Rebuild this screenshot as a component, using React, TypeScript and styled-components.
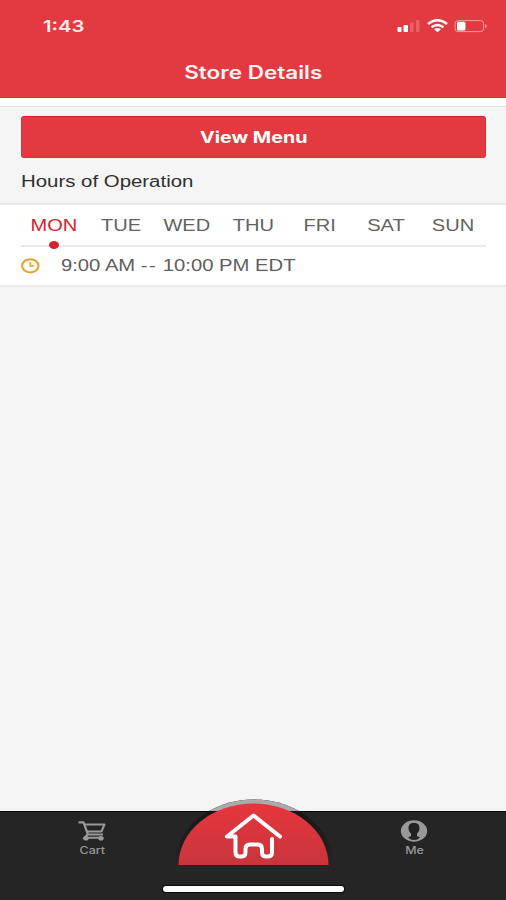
import React from "react";
import styled, { createGlobalStyle } from "styled-components";

const Global = createGlobalStyle`
  * { box-sizing: border-box; }
  html, body { margin: 0; padding: 0; background: #f5f5f5; }
  body { font-family: "Liberation Sans", Arial, sans-serif; }
  svg { display: block; }
`;

const Screen = styled.div`
  width: 506px;
  height: 900px;
  display: flex;
  flex-direction: column;
  background: #f5f5f5;
  overflow: hidden;
`;

const Header = styled.header`
  height: 98px;
  flex: none;
  background: #e23a40;
  border-bottom: 1px solid #dc3037;
  color: #fff;
`;

const StatusBar = styled.div`
  height: 52px;
  display: flex;
  justify-content: space-between;
  padding-right: 17px;
  padding-left: 43px;
`;

const Wide = styled.span<{ $scale: number; $origin?: string }>`
  display: inline-block;
  white-space: nowrap;
  transform: scaleX(${(p) => p.$scale});
  transform-origin: ${(p) => p.$origin ?? "center"} center;
`;

const Dashes = styled.span`
  letter-spacing: 1.2px;
`;

const Clock = styled.div`
  font: 600 16.5px/52px Inter, sans-serif;
  color: #ffecec;
`;

const StatusIcons = styled.div`
  padding-top: 17px;
`;

const Title = styled.h1`
  margin: 0;
  text-align: center;
  font: 600 18px/42px Inter, sans-serif;
  color: #fff3f3;
`;

const Gap = styled.div`
  height: 9px;
  flex: none;
  background: #fff;
  border-bottom: 1px solid #e4e4e4;
`;

const Actions = styled.section`
  height: 96px;
  flex: none;
  padding: 9px 20px 0 21px;
`;

const MenuButton = styled.button`
  display: block;
  width: 100%;
  height: 42px;
  padding: 0;
  border: 1px solid #dc3037;
  border-top-color: #d21f30;
  border-radius: 3px;
  background: #e23a40;
  color: #fff;
  font: 700 16px/40px Inter, sans-serif;
`;

const SectionLabel = styled.div`
  font-size: 16px;
  line-height: 48px;
  height: 45px;
  color: #303030;
`;

const HoursCard = styled.section`
  height: 84px;
  flex: none;
  padding: 0 20px 0 21px;
  background: #fff;
  border-top: 2px solid #e9e9e9;
  border-bottom: 2px solid #e9e9e9;
`;

const Days = styled.div`
  display: grid;
  grid-template-columns: repeat(7, 1fr);
  height: 42px;
  border-bottom: 2px solid #e9e9e9;
`;

const Day = styled.div<{ $active?: boolean }>`
  position: relative;
  text-align: center;
  font-size: 17px;
  line-height: 41px;
  color: ${(p) => (p.$active ? "#d9202e" : "#626262")};
`;

const Dot = styled.i`
  position: absolute;
  left: 50%;
  bottom: -3px;
  width: 10px;
  height: 8px;
  margin-left: -5px;
  border-radius: 50%;
  background: #d9202e;
`;

const HoursRow = styled.div`
  display: flex;
  align-items: center;
  height: 38px;
  gap: 21px;
  font-size: 17px;
  color: #5e5e5e;
`;

const Spacer = styled.main`
  flex: 1;
`;

const TabBar = styled.nav`
  position: relative;
  height: 89px;
  flex: none;
  display: flex;
  justify-content: space-between;
  padding: 0 52px;
  background: #252525;
  border-top: 1px solid #050505;
`;

const Tab = styled.div`
  width: 80px;
  display: flex;
  flex-direction: column;
  align-items: center;
  padding-top: 8px;
  font: 500 10px/14px Inter, sans-serif;
  color: #999;
`;

const TabIcon = styled.div`
  height: 23px;
`;

const HomeButton = styled.div`
  position: absolute;
  left: 169px;
  top: -17px;
`;

const HomeIndicator = styled.div`
  position: absolute;
  left: 163px;
  bottom: 8px;
  width: 181px;
  height: 6px;
  border-radius: 4px;
  background: #fff;
  box-shadow: 0 0 1px 1px #0c0c0c;
`;

const days = ["MON", "TUE", "WED", "THU", "FRI", "SAT", "SUN"];

const StatusGlyphs = () => (
  <svg width="92" height="18" viewBox="0 0 92 18" fill="#fff">
    <rect x="0.5" y="10" width="4" height="5" rx="1" />
    <rect x="6.5" y="8" width="4.5" height="7" rx="1" />
    <rect x="13" y="5.5" width="3.5" height="9.5" rx="1" opacity=".2" />
    <rect x="19" y="3" width="3.5" height="12" rx="1" opacity=".2" />
    <g fill="none" stroke="#fff" strokeWidth="2.4">
      <path d="M31 7Q40.5 -.4 50 7" />
      <path d="M34.5 10.2Q40.5 5.7 46.500 10.2" />
    </g>
    <path d="M37.1 12.2Q40.5 9.8 43.9 12.2L40.5 15.3Z" />
    <rect x="58.1" y="3.6" width="28.5" height="11" rx="3" fill="none" stroke="#fff" opacity=".5" />
    <rect x="60" y="4.8" width="8.5" height="8.700" rx="1.5" />
    <path d="M88 7Q91.5 9 88 11.5Z" opacity=".5" />
  </svg>
);

const ClockIcon = () => (
  <svg width="19" height="16" viewBox="0 0 19 16" fill="none" stroke="#dfa42b">
    <ellipse cx="9.3" cy="7.800" rx="8.2" ry="6.6" strokeWidth="2" />
    <path d="M9.3 3.8V8H13.3" strokeWidth="1.6" />
  </svg>
);

const CartIcon = () => (
  <svg width="30" height="22" viewBox="0 0 30 22" fill="none" stroke="#999">
    <path d="M1.500 2.3H6.5L11 14.500H26" strokeWidth="2.2" strokeLinejoin="round" />
    <path d="M7.4 4.500H27.5L24.5 11.500H10" strokeWidth="2" strokeLinejoin="round" />
    <path d="M10.500 14.500L7.5 17.800H25" strokeWidth="2" />
    <ellipse cx="9" cy="18.3" rx="2.7" ry="2.3" fill="#999" stroke="none" />
    <ellipse cx="24" cy="18.3" rx="2.7" ry="2.3" fill="#999" stroke="none" />
  </svg>
);

const PersonIcon = () => (
  <svg width="28" height="22" viewBox="0 0 28 22">
    <ellipse cx="14" cy="11" rx="13.2" ry="10.7" fill="#999" />
    <path
      fill="#222"
      d="M14 3C10.2 3 8.500 4.900 8.500 8C8.500 10.500 9.5 12.300 11 13.500V16L8 17.500Q10.500 20 14 20T20 17.500L17 16V13.500C18.500 12.300 19.500 10.500 19.500 8C19.500 4.900 17.800 3 14 3Z"
    />
  </svg>
);

const HomeDome = () => (
  <svg width="170" height="74" viewBox="0 0 170 74">
    <defs>
      <linearGradient id="dome" x1="0" y1="0" x2="0" y2="1">
        <stop offset="0" stopColor="#e7353d" />
        <stop offset="1" stopColor="#c8353c" />
      </linearGradient>
      <linearGradient id="rim" x1="0" y1="0" x2="0" y2="1">
        <stop offset="0" stopColor="#131313" />
        <stop offset="1" stopColor="#252525" />
      </linearGradient>
      <clipPath id="above">
        <rect width="170" height="16" />
      </clipPath>
    </defs>
    <path d="M5.5 70.5A79.5 66 0 0 1 164.5 70.5Z" fill="url(#rim)" />
    <path d="M5.5 70.5A79.5 66 0 0 1 164.5 70.5Z" fill="#aaa" clipPath="url(#above)" />
    <path d="M9.5 70A75 61.5 0 0 1 159.5 70Z" fill="url(#dome)" />
    <path
      d="M111 41.500L84.500 20.500L58 41.500H66.5V57Q66.5 61.5 70 61.5H73Q76.5 61.5 76.5 57V54Q76.5 49.5 80.5 49.5H89Q93 49.5 93 54V57Q93 61.5 96.5 61.5H99.5Q103 61.5 103 57V44"
      fill="none"
      stroke="#fff"
      strokeWidth="4"
      strokeLinejoin="round"
      strokeLinecap="round"
    />
  </svg>
);

export default function App() {
  return (
    <Screen>
      <Global />
      <Header>
        <StatusBar>
          <Clock><Wide $scale={1.23} $origin="left">1:43</Wide></Clock>
          <StatusIcons><StatusGlyphs /></StatusIcons>
        </StatusBar>
        <Title><Wide $scale={1.25}>Store Details</Wide></Title>
      </Header>
      <Gap />
      <Actions>
        <MenuButton><Wide $scale={1.23}>View Menu</Wide></MenuButton>
        <SectionLabel><Wide $scale={1.275} $origin="left">Hours of Operation</Wide></SectionLabel>
      </Actions>
      <HoursCard>
        <Days>
          {days.map((name, i) => (
            <Day key={name} $active={i === 0}>
              <Wide $scale={1.18}>{name}</Wide>
              {i === 0 && <Dot />}
            </Day>
          ))}
        </Days>
        <HoursRow>
          <ClockIcon />
          <Wide $scale={1.19} $origin="left">9:00 AM <Dashes>--</Dashes> 10:00 PM EDT</Wide>
        </HoursRow>
      </HoursCard>
      <Spacer />
      <TabBar>
        <Tab><TabIcon><CartIcon /></TabIcon><Wide $scale={1.24}>Cart</Wide></Tab>
        <HomeButton><HomeDome /></HomeButton>
        <Tab><TabIcon><PersonIcon /></TabIcon><Wide $scale={1.24}>Me</Wide></Tab>
        <HomeIndicator />
      </TabBar>
    </Screen>
  );
}
